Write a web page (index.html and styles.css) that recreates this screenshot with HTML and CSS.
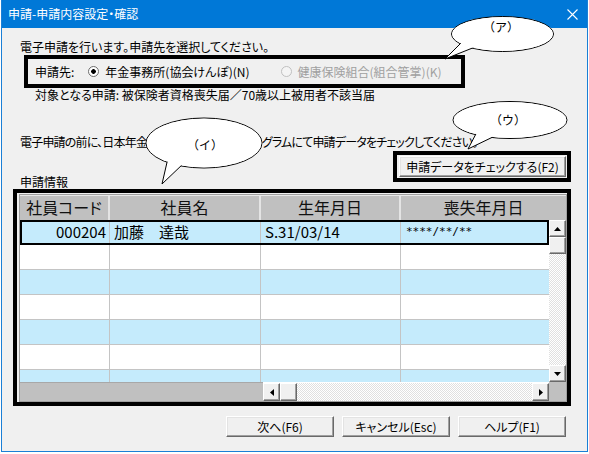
FILE: index.html
```html
<!DOCTYPE html>
<html lang="ja">
<head>
  <meta charset="UTF-8">
  <title>申請-申請内容設定・確認</title>
  <link rel="stylesheet" href="styles.css">
</head>
<body>

  <div class="window">
    <!-- タイトルバー -->
    <div class="titlebar">
      <span class="title">申請-申請内容設定・確認</span>
      <svg class="close" width="11" height="11" viewBox="0 0 11 11">
        <path d="M0.5 0.5 L10.5 10.5 M10.5 0.5 L0.5 10.5" stroke="#fff" stroke-width="1.1" fill="none"/>
      </svg>
    </div>

    <div class="client">
      <p class="lead">電子申請を行います。申請先を選択してください。</p>

      <!-- 申請先 -->
      <div class="mark dest">
        <span class="dest-label">申請先:</span>
        <label class="radio"><span class="dot on"></span>年金事務所(協会けんぽ)(N)</label>
        <label class="radio off"><span class="dot"></span>健康保険組合(組合管掌)(K)</label>
      </div>
      <p class="target">対象となる申請: 被保険者資格喪失届／70歳以上被用者不該当届</p>

      <p class="notice">電子申請の前に、日本年金機構提供のチェックプログラムにて申請データをチェックしてください。</p>

      <div class="grid-top">
        <span class="section">申請情報</span>
        <div class="mark check">
          <button class="btn check-btn">申請データをチェックする(F2)</button>
        </div>
      </div>

      <!-- 申請情報グリッド -->
      <div class="mark grid-box">
        <div class="grid">
          <div class="g-head">
            <div class="hc c1">社員コード</div>
            <div class="hc c2">社員名</div>
            <div class="hc c3">生年月日</div>
            <div class="hc c4h">喪失年月日</div>
          </div>
          <div class="g-body">
            <div class="rows">
              <div class="row alt sel">
                <div class="c c1 num">000204</div>
                <div class="c c2">加藤　達哉</div>
                <div class="c c3">S.31/03/14</div>
                <div class="c c4 mono">****/**/**</div>
              </div>
              <div class="row"><div class="c c1"></div><div class="c c2"></div><div class="c c3"></div><div class="c c4"></div></div>
              <div class="row alt"><div class="c c1"></div><div class="c c2"></div><div class="c c3"></div><div class="c c4"></div></div>
              <div class="row"><div class="c c1"></div><div class="c c2"></div><div class="c c3"></div><div class="c c4"></div></div>
              <div class="row alt"><div class="c c1"></div><div class="c c2"></div><div class="c c3"></div><div class="c c4"></div></div>
              <div class="row"><div class="c c1"></div><div class="c c2"></div><div class="c c3"></div><div class="c c4"></div></div>
              <div class="row alt"><div class="c c1"></div><div class="c c2"></div><div class="c c3"></div><div class="c c4"></div></div>
            </div>
            <div class="vscroll">
              <div class="sb-btn"><svg width="7" height="4" viewBox="0 0 7 4"><polygon points="0,4 7,4 3.5,0" fill="#000"/></svg></div>
              <div class="sb-btn"></div>
              <div class="sb-track"></div>
              <div class="sb-btn"><svg width="7" height="4" viewBox="0 0 7 4"><polygon points="0,0 7,0 3.5,4" fill="#000"/></svg></div>
            </div>
          </div>
          <div class="g-foot">
            <div class="frozen"></div>
            <div class="hscroll">
              <div class="sb-btn"><svg width="4" height="7" viewBox="0 0 4 7"><polygon points="4,0 4,7 0,3.5" fill="#000"/></svg></div>
              <div class="sb-btn"></div>
              <div class="sb-track"></div>
              <div class="sb-btn"><svg width="4" height="7" viewBox="0 0 4 7"><polygon points="0,0 0,7 4,3.5" fill="#000"/></svg></div>
            </div>
            <div class="corner"></div>
          </div>
        </div>
      </div>

      <div class="actions">
        <button class="btn">次へ(F6)</button>
        <button class="btn">キャンセル(Esc)</button>
        <button class="btn">ヘルプ(F1)</button>
      </div>
    </div>
  </div>

  <!-- 吹き出し -->
  <svg class="callouts" width="589" height="454" viewBox="0 0 589 454">
    <g>
      <ellipse cx="502.5" cy="34" rx="51" ry="17.5" fill="#fff" stroke="#000"/>
      <path d="M462 42 L445 59 L475 47" fill="#fff" stroke="#000"/>
      <ellipse cx="502.5" cy="34" rx="50.3" ry="16.8" fill="#fff"/>
      <text x="501" y="32" text-anchor="middle">（ア）</text>
    </g>
    <g>
      <ellipse cx="204" cy="143" rx="58" ry="25" fill="#fff" stroke="#000"/>
      <path d="M168 158 L162 184 L184 163" fill="#fff" stroke="#000"/>
      <ellipse cx="204" cy="143" rx="57.3" ry="24.3" fill="#fff"/>
      <text x="205" y="150" text-anchor="middle">（イ）</text>
    </g>
    <g>
      <ellipse cx="510" cy="120" rx="57" ry="18.5" fill="#fff" stroke="#000"/>
      <path d="M478 130 L468 149 L497 135" fill="#fff" stroke="#000"/>
      <ellipse cx="510" cy="120" rx="56.3" ry="17.8" fill="#fff"/>
      <text x="508" y="125" text-anchor="middle">（ウ）</text>
    </g>
  </svg>

</body>
</html>
```

FILE: styles.css
```css
* {
  box-sizing: border-box;
}
body {
  margin: 0;
  background: #fff;
  font-family: "Noto Sans CJK JP", sans-serif;
  font-size: 12px;
  line-height: 14px;
  color: #000;
  font-feature-settings: "palt";
}
p {
  margin: 0;
}

/* ウィンドウ枠 */
.window {
  width: 587px;
  height: 452px;
  margin-left: 1px;
  border: 1px solid #1a7fd6;
  border-top: 0;
  background: #f0f0f0;
  display: flex;
  flex-direction: column;
}
.titlebar {
  height: 28px;
  background: #0078d7;
  color: #fff;
  display: flex;
  align-items: center;
  justify-content: space-between;
  padding: 0 9px 0 6px;
}
.title {
  font-size: 12px;
}
.client {
  flex: 1;
  padding-top: 12px;
  display: flex;
  flex-direction: column;
}
.lead {
  padding-left: 18px;
}

/* 黒枠の強調 */
.mark {
  border: 4px solid #000;
}
.dest {
  width: 441px;
  height: 33px;
  margin: 1px 0 0 22px;
  padding-left: 7px;
  display: flex;
  align-items: center;
}
.dest-label {
  margin-right: 14px;
}
.radio {
  display: flex;
  align-items: center;
  gap: 6px;
}
.radio.off {
  margin-left: 31px;
  color: #a0a0a0;
}
.dot {
  width: 11px;
  height: 11px;
  border-radius: 50%;
  border: 1px solid #6e6e6e;
  background: #fff;
}
.dot.on {
  background: radial-gradient(circle, #000 0 2px, #fff 2.6px);
}
.radio.off .dot {
  border-color: #c0c0c0;
  background: #f4f4f4;
}
.target {
  margin-left: 33px;
}
.notice {
  margin-top: 33px;
  padding-left: 18px;
  letter-spacing: -0.8px;
}

.grid-top {
  height: 38px;
  margin-top: 2px;
  display: flex;
  justify-content: space-between;
}
.section {
  align-self: flex-end;
  padding-left: 18px;
}
.check {
  width: 178px;
  height: 31px;
  margin-right: 16px;
  padding: 1px 1px 1px 2px;
}
.check-btn {
  width: 167px;
}

/* ボタン */
.btn {
  font: inherit;
  font-feature-settings: "palt";
  height: 21px;
  padding: 0;
  color: #000;
  background: #f0f0f0;
  border: 1px solid;
  border-color: #fff #696969 #696969 #fff;
  box-shadow: inset -1px -1px #a0a0a0, inset 1px 1px #e3e3e3;
}

/* グリッド */
.grid-box {
  width: 558px;
  height: 217px;
  margin-left: 11px;
  padding: 1px 0 0 2px;
}
.grid {
  width: 548px;
  border: 1px solid #a0a0a0;
  background: #fff;
}
.g-head {
  height: 25px;
  display: flex;
  background: #c0c0c0;
  border-top: 1px solid #e8e8e8;
}
.hc {
  font-size: 16px;
  line-height: 23px;
  text-align: center;
  color: #111;
  border-right: 2px solid #e4e4e4;
}
.c1 { width: 90px; }
.c2 { width: 151px; }
.c3 { width: 140px; }
.c4 { width: 148px; }
.c4h {
  width: 165px;
  border-right: 0;
}
.g-body {
  height: 162px;
  display: flex;
}
.rows {
  width: 529px;
  overflow: hidden;
}
.row {
  height: 25px;
  display: flex;
  background: #fff;
  border-bottom: 1px solid #c4c4c4;
}
.row.alt {
  background: #c5ebfc;
}
.row.sel {
  outline: 2px solid #000;
  outline-offset: -2px;
}
.c {
  height: 24px;
  border-right: 1px solid #c4c4c4;
  font-size: 15px;
  line-height: 24px;
  white-space: nowrap;
  padding-left: 4px;
}
.c4 {
  border-right: 0;
}
.num {
  text-align: right;
  padding: 0 3px 0 0;
}
.mono {
  font-family: "DejaVu Sans Mono", monospace;
  font-size: 11px;
  padding-left: 5px;
}

/* スクロールバー */
.vscroll {
  width: 17px;
  display: flex;
  flex-direction: column;
}
.sb-btn {
  width: 17px;
  height: 17px;
  flex: none;
  display: flex;
  align-items: center;
  justify-content: center;
  background: #f0f0f0;
  border: 1px solid;
  border-color: #fff #696969 #696969 #fff;
  box-shadow: inset -1px -1px #a0a0a0;
}
.sb-track {
  flex: 1;
  background: repeating-conic-gradient(#fff 0 25%, #e0e0e0 0 50%) 0 0 / 2px 2px;
}
.g-foot {
  height: 19px;
  display: flex;
}
.frozen {
  width: 243px;
  background: #c0c0c0;
  border-top: 1px solid #a8a8a8;
}
.hscroll {
  width: 286px;
  display: flex;
  padding-top: 1px;
  background: #fff;
}
.hscroll .sb-btn {
  height: 18px;
}
.corner {
  flex: 1;
  background: #c0c0c0;
}

.actions {
  margin-top: 10px;
  padding-right: 21px;
  display: flex;
  justify-content: flex-end;
  gap: 8px;
}
.actions .btn {
  width: 108px;
}

/* 吹き出し */
.callouts {
  position: absolute;
  left: 0;
  top: 0;
  pointer-events: none;
  font-family: "Noto Sans CJK JP", sans-serif;
  font-size: 12px;
  font-feature-settings: normal;
}
```
